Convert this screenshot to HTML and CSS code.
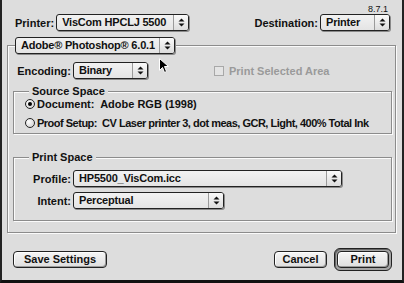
FILE: index.html
```html
<!DOCTYPE html>
<html lang="en">
<head>
    <meta charset="UTF-8">
    <title>Print</title>
    <link rel="stylesheet" href="styles.css">
</head>
<body>
    <div class="dialog">
        <div class="version">8.7.1</div>

        <!-- Printer and destination -->
        <div class="top-row">
            <div class="field">
                <span class="label">Printer:</span>
                <div class="popup printer-popup">
                    <span class="popup-text">VisCom HPCLJ 5500</span>
                    <span class="popup-arrows"><svg width="7" height="9" viewBox="0 0 7 9"><polygon points="3.5,0.5 6.5,3.5 0.5,3.5"/><polygon points="0.5,5.5 6.5,5.5 3.5,8.5"/></svg></span>
                </div>
            </div>
            <div class="field">
                <span class="label">Destination:</span>
                <div class="popup dest-popup">
                    <span class="popup-text">Printer</span>
                    <span class="popup-arrows"><svg width="7" height="9" viewBox="0 0 7 9"><polygon points="3.5,0.5 6.5,3.5 0.5,3.5"/><polygon points="0.5,5.5 6.5,5.5 3.5,8.5"/></svg></span>
                </div>
            </div>
        </div>

        <!-- Plug-in panel -->
        <fieldset class="group outer-group">
            <legend class="popup-legend">
                <div class="popup app-popup">
                    <span class="popup-text">Adobe® Photoshop® 6.0.1</span>
                    <span class="popup-arrows"><svg width="7" height="9" viewBox="0 0 7 9"><polygon points="3.5,0.5 6.5,3.5 0.5,3.5"/><polygon points="0.5,5.5 6.5,5.5 3.5,8.5"/></svg></span>
                </div>
            </legend>

            <div class="encoding-row">
                <span class="label enc-label">Encoding:</span>
                <div class="popup encoding-popup">
                    <span class="popup-text">Binary</span>
                    <span class="popup-arrows"><svg width="7" height="9" viewBox="0 0 7 9"><polygon points="3.5,0.5 6.5,3.5 0.5,3.5"/><polygon points="0.5,5.5 6.5,5.5 3.5,8.5"/></svg></span>
                </div>
                <label class="check disabled"><span class="checkbox"></span>Print Selected Area</label>
            </div>

            <fieldset class="group inner-group source-group">
                <legend class="text-legend">Source Space</legend>
                <div class="radio-row"><span class="radio checked"></span>Document:&nbsp; Adobe RGB (1998)</div>
                <div class="radio-row proof-row"><span class="radio"></span><span class="proof-text">Proof Setup:&nbsp; CV Laser printer 3, dot meas, GCR, Light, 400% Total Ink</span></div>
            </fieldset>

            <fieldset class="group inner-group print-group">
                <legend class="text-legend">Print Space</legend>
                <div class="form-grid">
                    <span class="label">Profile:</span>
                    <div class="popup profile-popup">
                        <span class="popup-text">HP5500_VisCom.icc</span>
                        <span class="popup-arrows"><svg width="7" height="9" viewBox="0 0 7 9"><polygon points="3.5,0.5 6.5,3.5 0.5,3.5"/><polygon points="0.5,5.5 6.5,5.5 3.5,8.5"/></svg></span>
                    </div>
                    <span class="label">Intent:</span>
                    <div class="popup intent-popup">
                        <span class="popup-text">Perceptual</span>
                        <span class="popup-arrows"><svg width="7" height="9" viewBox="0 0 7 9"><polygon points="3.5,0.5 6.5,3.5 0.5,3.5"/><polygon points="0.5,5.5 6.5,5.5 3.5,8.5"/></svg></span>
                    </div>
                </div>
            </fieldset>
        </fieldset>

        <!-- Bottom buttons -->
        <div class="button-row">
            <button class="btn save-btn">Save Settings</button>
            <div class="right-buttons">
                <button class="btn cancel-btn">Cancel</button>
                <div class="default-ring"><button class="btn print-btn">Print</button></div>
            </div>
        </div>

        <!-- Mouse pointer -->
        <svg class="cursor" width="10" height="16" viewBox="0 0 10 16">
            <path d="M0.5,0.5 L0.5,12.5 L3.5,9.5 L5.5,14.5 L7.5,13.5 L5.5,8.5 L9.5,8.5 Z" fill="#000" stroke="#fff" stroke-width="1"/>
        </svg>
    </div>
</body>
</html>
```

FILE: styles.css
```css
* {
    box-sizing: border-box;
}
body {
    margin: 0;
    background-color: #dddddd;
}
.dialog {
    position: relative;
    width: 404px;
    height: 283px;
    background-color: #dddddd;
    border-left: 2px solid #222;
    border-right: 2px solid #222;
    border-bottom: 3px solid #111;
    font-family: "Liberation Sans", Arial, sans-serif;
    font-weight: bold;
    font-size: 11px;
    color: #111;
}
.version {
    height: 13px;
    padding: 5px 14px 0 0;
    text-align: right;
    font-size: 9px;
    font-weight: normal;
    line-height: 8px;
}
.top-row {
    display: flex;
    justify-content: space-between;
    margin-top: 1px;
    padding: 0 12px 0 13px;
}
.field {
    display: flex;
    align-items: center;
    gap: 2px;
}
.label {
    white-space: nowrap;
}

/* Popup menus */
.popup {
    display: flex;
    height: 17px;
    border: 1px solid #222;
    border-radius: 3px;
    background: linear-gradient(#f2f2f2, #e4e4e4);
    box-shadow: 1px 1px 0 #8a8a8a;
    overflow: hidden;
}
.popup-text {
    flex: 1;
    padding-left: 5px;
    line-height: 15px;
    letter-spacing: -0.2px;
    white-space: nowrap;
}
.popup-arrows {
    width: 15px;
    display: flex;
    align-items: center;
    justify-content: center;
    border-left: 1px solid #9a9a9a;
    background: linear-gradient(#fafafa, #dcdcdc);
}
.popup-arrows svg {
    fill: #111;
}
.printer-popup { width: 133px; }
.dest-popup { width: 70px; }
.app-popup { width: 160px; }
.encoding-popup { width: 75px; }
.profile-popup { width: 269px; }
.intent-popup { width: 151px; }

/* Group boxes */
.group {
    min-width: 0;
    border: 1px solid #8c8c8c;
    box-shadow: inset 1px 1px 0 #fbfbfb, 1px 1px 0 #fbfbfb;
}
.outer-group {
    margin: 6px 6px 0 5px;
    padding: 8px 3px 11px 5px;
}
.popup-legend {
    padding: 0;
    margin-left: 2px;
    background-color: #dddddd;
}
.text-legend {
    margin-left: 4px;
    padding: 0 3px;
    line-height: 11px;
    background-color: #dddddd;
}
.inner-group {
    margin: 0;
    padding: 0 4px 3px 11px;
}
.source-group {
    margin-top: 7px;
}
.print-group {
    margin-top: 18px;
    padding-bottom: 11px;
}

.encoding-row {
    display: flex;
    align-items: center;
}
.enc-label {
    width: 58px;
    text-align: right;
    margin-right: 2px;
}
.check {
    display: flex;
    align-items: center;
    margin-left: 66px;
    gap: 5px;
}
.check.disabled {
    color: #9a9a9a;
}
.checkbox {
    width: 10px;
    height: 10px;
    border: 1px solid #a8a8a8;
    background-color: #e4e4e4;
}

/* Radio buttons */
.radio-row {
    display: flex;
    align-items: center;
    gap: 2px;
    line-height: 14px;
    white-space: nowrap;
}
.proof-row {
    margin-top: 5px;
}
.proof-text {
    letter-spacing: -0.5px;
}
.radio {
    flex-shrink: 0;
    width: 10px;
    height: 10px;
    border: 1px solid #222;
    border-radius: 50%;
    background: radial-gradient(circle at 35% 35%, #ffffff, #c8c8c8);
    display: flex;
    align-items: center;
    justify-content: center;
}
.radio.checked::after {
    content: "";
    width: 4px;
    height: 4px;
    border-radius: 50%;
    background-color: #000;
}

.form-grid {
    display: grid;
    grid-template-columns: 46px auto;
    column-gap: 2px;
    row-gap: 5px;
    align-items: center;
    justify-items: start;
    margin-top: 7px;
}
.form-grid .label {
    justify-self: end;
}

/* Buttons */
.button-row {
    display: flex;
    justify-content: space-between;
    align-items: center;
    margin-top: 15px;
    padding: 0 10px 0 11px;
}
.right-buttons {
    display: flex;
    align-items: center;
    gap: 7px;
}
.btn {
    height: 17px;
    padding: 0;
    border: 1px solid #222;
    border-radius: 4px;
    background: linear-gradient(#f6f6f6, #dedede);
    box-shadow: inset -1px -1px 0 #9a9a9a, inset 1px 1px 0 #fff;
    font: inherit;
    color: #111;
    line-height: 15px;
    text-align: center;
}
.save-btn { width: 94px; }
.cancel-btn { width: 53px; }
.print-btn { width: 52px; }
.default-ring {
    display: flex;
    padding: 2px;
    border: 1px solid #222;
    border-radius: 6px;
    background-color: #a4a4a4;
    box-shadow: inset 1px 1px 0 #666;
}

.cursor {
    position: absolute;
    left: 157px;
    top: 58px;
}
```
